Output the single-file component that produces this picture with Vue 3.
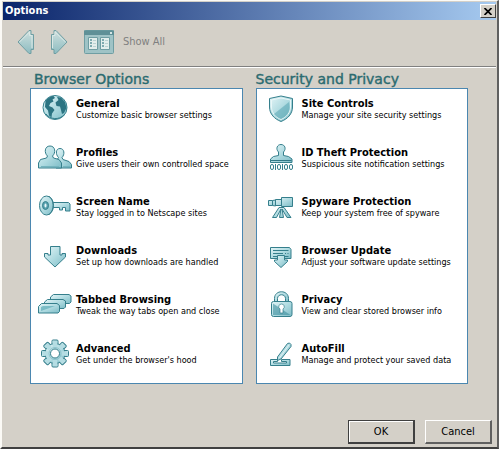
<script setup>
const groups = [
  {
    title: 'Browser Options',
    items: [
      { icon: 'globe', name: 'General', text: 'Customize basic browser settings' },
      { icon: 'people', name: 'Profiles', text: 'Give users their own controlled space' },
      { icon: 'key', name: 'Screen Name', text: 'Stay logged in to Netscape sites' },
      { icon: 'down', name: 'Downloads', text: 'Set up how downloads are handled' },
      { icon: 'tabs', name: 'Tabbed Browsing', text: 'Tweak the way tabs open and close' },
      { icon: 'gear', name: 'Advanced', text: "Get under the browser's hood" },
    ],
  },
  {
    title: 'Security and Privacy',
    items: [
      { icon: 'shield', name: 'Site Controls', text: 'Manage your site security settings' },
      { icon: 'stamp', name: 'ID Theft Protection', text: 'Suspicious site notification settings' },
      { icon: 'scope', name: 'Spyware Protection', text: 'Keep your system free of spyware' },
      { icon: 'update', name: 'Browser Update', text: 'Adjust your software update settings' },
      { icon: 'lock', name: 'Privacy', text: 'View and clear stored browser info' },
      { icon: 'pen', name: 'AutoFill', text: 'Manage and protect your saved data' },
    ],
  },
]
const teeth = [0, 45, 90, 135, 180, 225, 270, 315]
</script>

<template>
  <main class="window">
    <header class="titlebar">
      <h1>Options</h1>
      <button class="close" type="button" aria-label="Close">
        <svg width="8" height="7" viewBox="0 0 8 7" aria-hidden="true"><path d="M.5 0 7.5 7M7.5 0 .5 7" stroke="#000" stroke-width="1.7" /></svg>
      </button>
    </header>

    <nav class="toolbar">
      <button class="tool" type="button" aria-label="Back">
        <svg width="18" height="26" viewBox="0 0 18 26" aria-hidden="true">
          <defs>
            <linearGradient id="fade" x1="0" y1="0" x2="0" y2="1">
              <stop offset="0" stop-color="#cfe0de" />
              <stop offset="1" stop-color="#8dbcc1" />
            </linearGradient>
          </defs>
          <path class="faded" d="M1 13 12 1.500h2V5.500h2.500v15H14v4h-2z" />
          <path class="glint" d="M2.500 13 12.500 3v3.500h2.500v12.500" />
        </svg>
      </button>
      <button class="tool" type="button" aria-label="Forward">
        <svg width="18" height="26" viewBox="0 0 18 26" aria-hidden="true">
          <path class="faded" d="M17 13 6 1.500H4V5.500H1.500v15H4v4h2z" />
          <path class="glint" d="M2.500 19V6.500H5V3l10.500 10" />
        </svg>
      </button>
      <button class="tool show-all" type="button">
        <svg width="32" height="26" viewBox="0 0 32 26" aria-hidden="true">
          <rect x="1.500" y="1.500" width="29" height="23" rx="1" fill="#9fc3c6" stroke="#6f9ea3" />
          <path d="M1 1.500h30V6H1z" fill="#5f9097" />
          <path d="M27 3h2v2h-2z" fill="#d7e6e5" />
          <path d="M5.500 8.500h9v12h-9zM17.500 8.500h9v12h-9z" fill="#e2eeec" stroke="#6f9ea3" />
          <path d="M7 10h2v2H7zM7 13h2v2H7zM7 16h2v2H7zM19 10h2v2h-2zM19 13h2v2h-2zM19 16h2v2h-2z" fill="#7eabb0" />
          <path d="M10 11.500h3M10 14.500h3M10 17.500h3M22 11.500h3M22 14.500h3M22 17.500h3" stroke="#b9d2d2" />
        </svg>
        <span>Show All</span>
      </button>
    </nav>

    <div class="groups">
      <section v-for="group in groups" :key="group.title" class="group">
        <h2>{{ group.title }}</h2>
        <ul>
          <li v-for="item in group.items" :key="item.name">
            <svg class="icon" width="36" height="36" viewBox="0 0 36 36" aria-hidden="true">
              <defs>
                <linearGradient :id="'fill-' + item.icon" x1="0" y1="0" x2="1" y2="1">
                  <stop offset="0" stop-color="#e4f5f7" />
                  <stop offset=".5" stop-color="#b0dbe1" />
                  <stop offset="1" stop-color="#7dbcc6" />
                </linearGradient>
              </defs>
              <g :fill="'url(#fill-' + item.icon + ')'" class="ink">
                <template v-if="item.icon === 'globe'">
                  <circle cx="18" cy="18.500" r="12" />
                  <path class="land" d="M8.500 12c2-3 5-5 8-5l1.500 2-2.500 1.500 1 2-3 1.500-1.500 3 3.500 1.500 2 2.500-2.500 3.500-.5 4-2.500-2-1-5-3-3.500zM20 8l4 .5 4 4.500 1.500 6-2.500 5-2 1-1-4-1-3.500-3.500-.5-1-3.500 3-2.500z" />
                  <path d="M9 25a12 12 0 0 0 18 1" fill="none" />
                </template>
                <template v-else-if="item.icon === 'people'">
                  <path d="M19 30v-6l1.500-3 1-1.500c-3-3-3-9 1.500-9s5 6 2 9l1 2 6 2 2.500 3v3.500z" />
                  <path d="M1.500 30v-5l2-3.500 6-1.500 1-2c-3.500-3-3-10 2.500-10s6 7 2.500 10l1 2 5.500 1.500 2.500 3.500v5z" />
                  <path d="M4 28.500h18M26 28.500h7" stroke="#74b4be" />
                </template>
                <template v-else-if="item.icon === 'key'">
                  <path d="M15.500 15.500H31.500L33 17v7h-4.500v-3.500h-3V23h-3v-2.500h-7z" />
                  <ellipse cx="9.500" cy="18.500" rx="7" ry="9.500" />
                  <path d="M12 9.500c5 2 6 14 0 18" fill="none" />
                  <ellipse cx="8.500" cy="18.500" rx="3" ry="4" fill="#5aa3b0" />
                  <ellipse cx="8.500" cy="18.500" rx="1" ry="2" fill="#e8f6f8" stroke="none" />
                </template>
                <template v-else-if="item.icon === 'down'">
                  <path d="M13.500 10.500h9.500V19h2v-1.500h3.500V21L18 31 7.500 21v-3.500H11V19h2.500z" />
                </template>
                <template v-else-if="item.icon === 'tabs'">
                  <path d="M13.500 18.500V12l3-2.500H32l2 1.500v6l-1.500 1.500z" />
                  <path d="M7.500 23.500V17l3-2.500H26l2.500 1.500v6L27 23.500z" />
                  <path d="M1.500 28v-6.500l3-3H20l2.500 2v6L21 28z" />
                  <path d="M4 26v-4l2-1h12z" fill="#5eacb8" stroke="none" opacity=".7" />
                </template>
                <template v-else-if="item.icon === 'gear'">
                  <rect v-for="angle in teeth" :key="angle" x="15" y="6" width="6" height="7" rx="1" :transform="'rotate(' + angle + ' 18 19.500)'" />
                  <circle cx="18" cy="19.500" r="10" />
                  <rect v-for="angle in teeth" :key="'t' + angle" x="15.700" y="7" width="4.600" height="6" fill="#b5dde3" stroke="none" :transform="'rotate(' + angle + ' 18 19.500)'" />
                  <circle cx="18" cy="19.500" r="6" fill="none" stroke="#8cc3cc" />
                  <circle cx="18" cy="19.500" r="4.500" fill="#fff" />
                </template>
                <template v-else-if="item.icon === 'shield'">
                  <path d="M6.500 9.500 18 7l11.500 2.500V18c0 7-5 12-11.500 14.500C11.500 30 6.500 25 6.500 18z" />
                  <path d="M8.500 11 18 9l9.500 2v7c0 6-4 10-9.500 12.500C12.500 28 8.500 24 8.500 18z" fill="none" stroke="#e9f7f8" />
                  <path d="m26 13-15 12c2 2.500 4 4 7 5 5-2.500 8.500-6 8.500-12z" fill="#58a5b2" stroke="none" opacity=".55" />
                </template>
                <template v-else-if="item.icon === 'stamp'">
                  <path d="M7.500 24.500V21l3-2.500 5-1v-3.500c-3-3-1.500-7.500 2.500-7.500s5.500 4.500 2.500 7.500v3.500l5 1 3.500 2.500v3.500z" />
                  <path d="M8 22.500h20.500" stroke="#2f7785" />
                  <g fill="#fff">
                    <rect x="7.500" y="26.500" width="3" height="5" rx="1.500" /><path d="M12.500 26v6" />
                    <rect x="14.500" y="26.500" width="3" height="5" rx="1.500" /><path d="M19.500 26v6" />
                    <rect x="21.500" y="26.500" width="3" height="5" rx="1.500" /><rect x="26.500" y="26.500" width="3" height="5" rx="1.500" />
                  </g>
                </template>
                <template v-else-if="item.icon === 'scope'">
                  <path d="M16 20.500 9.500 30.500h4L18 22l-1.500 8.500h4L19 22l5 8.500h4L21 20.500z" />
                  <path d="M12.500 12.500h6v-2H29.500v9h-11v-1h-6z" />
                  <path d="M5.500 13.500h4l3-.5v6l-3-.5h-4zM9.500 13.500v5M18.500 11v8" />
                </template>
                <template v-else-if="item.icon === 'update'">
                  <path d="M7.500 11.500h19l1.500 2v9h-20.500z" />
                  <path d="M10 14.500h15.500M10 17.500h10M22 17.500h1M24.500 17.500h1M10 20.500h15.500" />
                  <path d="M14.500 19.500h7V24h3v1.500L18 31.500l-6.500-6V24h3z" />
                </template>
                <template v-else-if="item.icon === 'lock'">
                  <path d="M11.500 18v-4.500c0-9 14-9 14 0V18h-3v-4.500c0-5-8-5-8 0V18z" />
                  <rect x="8.500" y="16.500" width="20.500" height="15" rx="2" />
                  <path d="M10 18.500 10 30h17.500z" fill="#3f909e" stroke="none" opacity=".6" />
                  <path d="M18.500 19a2.700 2.700 0 0 1 1.500 5v4h-3v-4a2.700 2.700 0 0 1 1.500-5z" fill="#fff" stroke-width=".7" />
                </template>
                <template v-else>
                  <path d="M7.500 25.500h7v2h-4v1.500h13v-1.500h-5v-2h8.500V31.500H7.500z" />
                  <path d="M14.500 26.500v-3.500L24.500 9.500l2-.5 1.500 1.500v2L18 25z" />
                  <path d="m16.500 24 9.500-13" stroke="#dff2f4" />
                </template>
              </g>
            </svg>
            <a href="#">
              <strong>{{ item.name }}</strong>
              <span>{{ item.text }}</span>
            </a>
          </li>
        </ul>
      </section>
    </div>

    <footer>
      <button class="action default" type="button">OK</button>
      <button class="action" type="button">Cancel</button>
    </footer>
  </main>
</template>

<style>
body {
  margin: 0;
  background: #fff;
}
</style>

<style scoped>
.window {
  box-sizing: border-box;
  display: flex;
  flex-direction: column;
  min-height: calc(100vh - 2px);
  padding: 1px 1px 3px 1px;
  border: solid;
  border-width: 1px 2px 2px 2px;
  border-color: #fbfaf6 #606060 #404040 #fbfaf6;
  background: #d4d0c8;
  font-family: "DejaVu Sans Condensed", "DejaVu Sans", sans-serif;
  font-size: 11px;
  color: #000;
}

button {
  margin: 0;
  font: inherit;
  color: inherit;
}

.titlebar {
  display: flex;
  align-items: center;
  justify-content: space-between;
  height: 18px;
  padding-left: 2px;
  background: linear-gradient(90deg, #0a246a, #a6caf0);
}

h1 {
  margin: 0;
  font-size: 11px;
  line-height: 18px;
  color: #fff;
}

.close {
  display: flex;
  align-items: center;
  justify-content: center;
  width: 16px;
  height: 14px;
  padding: 0;
  border: 1px solid;
  border-color: #fff #404040 #404040 #fff;
  background: #d4d0c8;
}

.toolbar {
  display: flex;
  align-items: center;
  gap: 15px;
  height: 43px;
  padding: 0 14px 3px;
  border-bottom: 1px solid #808080;
  box-shadow: 0 1px #fff;
}

.tool {
  display: flex;
  align-items: center;
  gap: 8px;
  padding: 0;
  border: 0;
  background: none;
  color: #808080;
}

.faded {
  fill: url(#fade);
  stroke: #6f9ea3;
}

.glint {
  fill: none;
  stroke: #dbe8e5;
}

.groups {
  display: grid;
  grid-template-columns: repeat(2, minmax(0, 1fr));
  gap: 13px;
  padding: 3px 28px 0 27px;
}

h2 {
  margin: 0 0 0 4px;
  font-family: "DejaVu Sans", sans-serif;
  font-size: 14px;
  font-weight: 400;
  line-height: 18px;
  color: #2b6b70;
  white-space: nowrap;
  -webkit-text-stroke: 0.4px #2b6b70;
}

.group + .group h2 {
  margin-left: 0;
}

ul {
  margin: 0;
  padding: 0;
  border: 1px solid #4b87b0;
  background: #fff;
  list-style: none;
}

li {
  display: flex;
  gap: 3px;
  height: 49px;
  padding-left: 6px;
}

.icon {
  flex: none;
}

.ink {
  stroke: #357f8c;
}

.land {
  fill: #2c7482;
  stroke: none;
}

a {
  display: flex;
  flex-direction: column;
  padding-top: 8px;
  color: inherit;
  text-decoration: none;
  white-space: nowrap;
}

strong {
  font-size: 11px;
  line-height: 13px;
}

a span {
  font-size: 9px;
  line-height: 11px;
}

footer {
  display: flex;
  justify-content: flex-end;
  gap: 10px;
  margin-top: auto;
  padding-right: 4px;
}

.action {
  width: 67px;
  height: 24px;
  padding: 0;
  border: solid;
  border-width: 1px 2px 2px 1px;
  border-color: #fff #606060 #606060 #fff;
  background: #d4d0c8;
}

.default {
  border-color: #404040;
  box-shadow: inset 1px 1px #fff;
}
</style>
